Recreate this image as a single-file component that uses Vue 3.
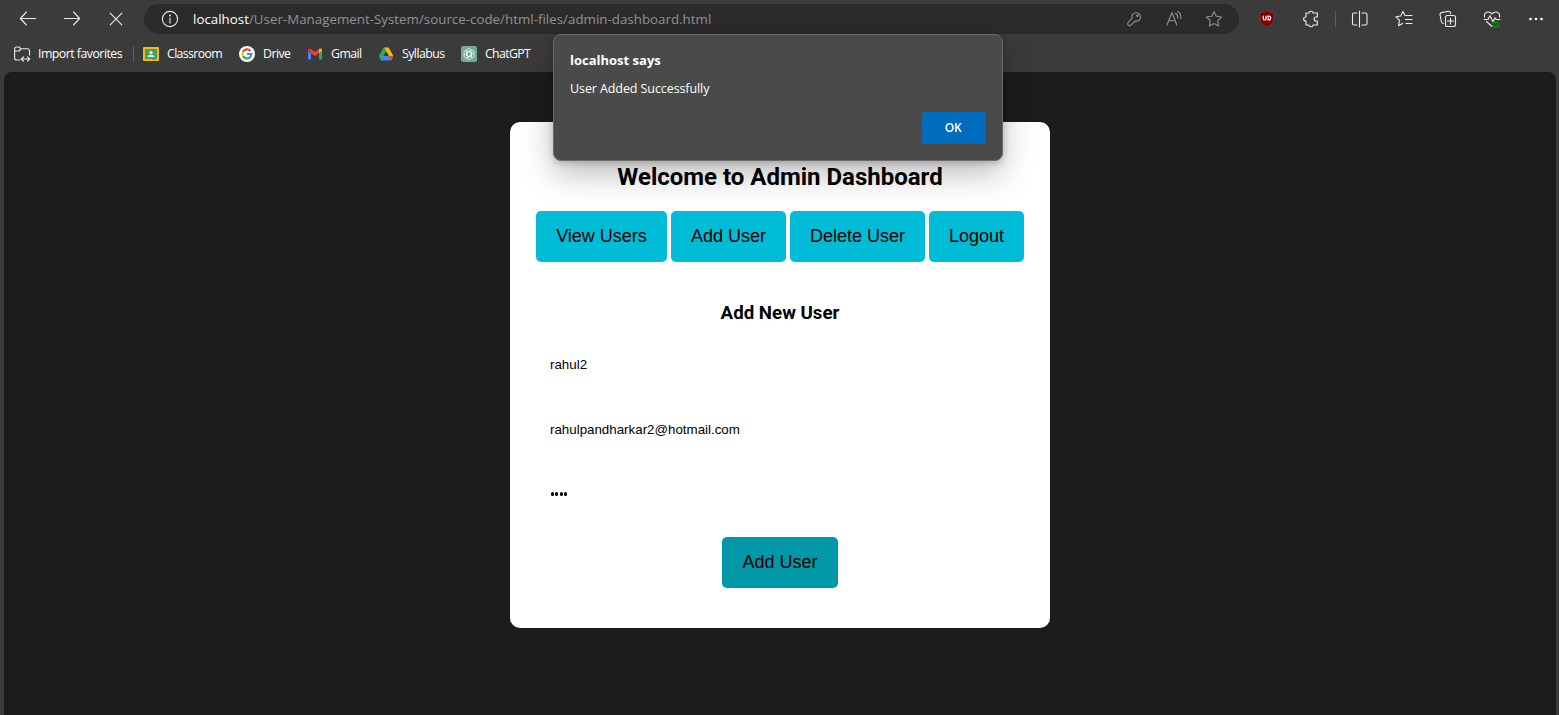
<script setup>
const favorites = [
  { id: 'classroom', label: 'Classroom', width: 56, tracking: -0.62 },
  { id: 'google', label: 'Drive', width: 28, tracking: -0.52 },
  { id: 'gmail', label: 'Gmail', width: 31, tracking: -0.55 },
  { id: 'drive', label: 'Syllabus', width: 43, tracking: -0.52 },
  { id: 'chatgpt', label: 'ChatGPT', width: 47, tracking: -0.65 },
]
const actions = [
  { label: 'View Users', width: 131 },
  { label: 'Add User', width: 115 },
  { label: 'Delete User', width: 135 },
  { label: 'Logout', width: 95 },
]
const petals = [0, 60, 120, 180, 240, 300]
</script>

<template>
  <div class="browser">
    <header class="toolbar">
      <div class="slot"><svg class="ic" viewBox="0 0 20 20"><path d="M17.5 9.5H2.500M8.500 3L2.400 9.500L8.500 16" /></svg></div>
      <div class="slot"><svg class="ic" viewBox="0 0 20 20"><path d="M2.500 9.500H17.500M11.500 3l6.100 6.500L11.500 16" /></svg></div>
      <div class="slot"><svg class="ic" viewBox="0 0 20 20"><path d="M4.200 4.200L15.800 15.800M15.800 4.200L4.200 15.800" /></svg></div>
      <div class="omnibox">
        <svg class="ic info" viewBox="0 0 20 20"><circle cx="10" cy="10" r="7.6" /><path d="M10 9v5" /><circle class="fill" cx="10" cy="6.5" r=".9" /></svg>
        <span class="url"><b>localhost</b>/User-Management-System/source-code/html-files/admin-dashboard.html</span>
        <div class="tools">
          <svg class="ic dim" viewBox="0 0 20 20"><path d="M8.2 8.9C7.3 5.8 9.6 3.7 12 3.7c2.6 0 4.4 2 4.4 4.2 0 2.7-2.3 4.800-5.100 4.100L6.800 16.200Q5.400 17.400 4.200 16.200Q3 15 4.200 13.500Z" /><circle cx="13.400" cy="6.700" r=".7" /></svg>
          <svg class="ic dim" viewBox="0 0 20 20"><path d="M3 16L7.700 4h.5L12.800 16M4.700 11.800h6.500M11.500 4.300c1.800 1 2.400 2.400 2.300 4.700M13.500 2.500c2.600 1.300 3.700 3.700 3.300 7" /></svg>
          <svg class="ic dim" viewBox="0 0 20 20"><path d="M10 2.500l2.300 4.800 5.200.7-3.800 3.700.9 5.300L10 14.600 5.400 17l.9-5.300L2.500 8l5.200-.7Z" /></svg>
        </div>
      </div>
      <div class="slot first">
        <svg class="ic" viewBox="0 0 20 20"><path class="shield" d="M10 1.800C12 3.200 14.300 3.700 16.700 3.900V10c0 3.800-3.100 6-6.700 7.800C6.400 16 3.300 13.800 3.300 10V3.900C5.700 3.700 8 3.200 10 1.800Z" /><path class="mark" d="M6.300 7v2.700c0 1.700 2.700 1.700 2.700 0V7M11 7v3.900h.8c2.500 0 2.500-3.900 0-3.900Z" /></svg>
      </div>
      <div class="slot"><svg class="ic" viewBox="0 0 20 20"><path d="M5 4h3c0-2.300 4-2.300 4 0h4.300v4h-1.200c-2.600 0-2.600 4 0 4h1.200v4H12c0 2.300-4 2.300-4 0H5v-4c-3.200 0-3.200-4 0-4Z" /></svg></div>
      <i class="bar"></i>
      <div class="slot"><svg class="ic crisp" viewBox="0 0 20 20"><path d="M7 4H4Q2.500 4 2.500 5.500v9Q2.500 16 4 16H7M12 4h3.500Q17 4 17 5.500v9q0 1.500-1.500 1.500H12M9.500 2v16" /></svg></div>
      <div class="slot"><svg class="ic" viewBox="0 0 20 20"><path d="M11.500 6.500H11L9 2.500 6.700 7 2 7.800l3.500 3.500-.9 5.400 4-2.100M11.500 6.500H18M11.500 10.500H18M12 14.500h6" /></svg></div>
      <div class="slot"><svg class="ic" viewBox="0 0 20 20"><rect x="7.500" y="6.500" width="10" height="11" rx="2" /><path d="M12.500 9v6M9.500 12h6M5.300 14.500L4.300 14Q3.500 13.500 3.300 12.500L2 5.500Q1.800 4 3.300 3.600L10.500 2.300Q12 2.100 12.400 3.500L12.700 4.600" /></svg></div>
      <div class="slot"><svg class="ic" viewBox="0 0 20 20"><path d="M2.500 8C1.500 3 7.300 1.500 10 5c2.700-3.500 8.500-2 7.500 3M2.200 10.500H6L8 6.800l3 6 2-4 1 1.700h4M4.500 12.500L10 17.500" /><circle class="green" cx="14" cy="15.300" r="3.600" /><path class="tick" d="M12.500 15.500l1 .8 2-2" /></svg></div>
      <div class="slot"><svg class="ic" viewBox="0 0 20 20"><circle class="fill" cx="4.500" cy="10" r="1.300" /><circle class="fill" cx="10" cy="10" r="1.300" /><circle class="fill" cx="15.500" cy="10" r="1.300" /></svg></div>
    </header>

    <nav class="favorites">
      <div class="fav">
        <svg class="ic folder" viewBox="0 0 16 16"><path d="M6 14H2.500Q.6 14 .6 12V3Q.6 1 2.500 1H5l2 1.800h6.500q2 0 2 2V9M.8 5H5l2-2M7.500 13h8M9.500 10.800L7.300 13l2.200 2.200M13.500 10.800L15.700 13l-2.200 2.200" /></svg>
        <span class="lead">Import favorites</span>
      </div>
      <i class="bar"></i>
      <div v-for="f in favorites" :key="f.id" class="fav item">
        <svg v-if="f.id === 'classroom'" viewBox="0 0 16 16"><rect y="1" width="16" height="14" rx="1" fill="#f6b913" /><rect x="2" y="3" width="12" height="10" fill="#44a05b" /><circle cx="8" cy="6.500" r="1.600" fill="#fff" /><path d="M4.500 11c.2-3 6.800-3 7 0Z" fill="#e5f4e8" /><path d="M9 13h4v1H9Z" fill="#c98f00" /></svg>
        <svg v-else-if="f.id === 'google'" viewBox="0 0 16 16"><circle cx="8" cy="8" r="8" fill="#fff" /><g fill="none" stroke-width="2.100"><path d="M11.500 5A4.500 4.500 0 0 0 4 5.900" stroke="#ea4335" /><path d="M4 5.900A4.600 4.600 0 0 0 4 10.100" stroke="#fbbc05" /><path d="M4 10.100A4.500 4.500 0 0 0 10.900 11.400" stroke="#34a853" /><path d="M8 8h4.500A4.500 4.500 0 0 1 10.900 11.400" stroke="#4285f4" /></g></svg>
        <svg v-else-if="f.id === 'gmail'" viewBox="0 0 16 16"><path d="M1 4v9.500h3V6.500Z" fill="#4285f4" /><path d="M15 4v9.500h-3V6.500Z" fill="#34a853" /><path d="M1 4C1 2.200 3 2 4.200 3L8 6v4L1 5Z" fill="#d93025" /><path d="M4 3v4l4 3 4-3V3L8 6Z" fill="#ea4335" /><path d="M12 3c1.200-1 3-.8 3 1v1l-3 2Z" fill="#fbbc05" /></svg>
        <svg v-else-if="f.id === 'drive'" viewBox="0 0 16 16"><path d="M5.500 1.500H8L9.800 4.800 4 14.500H3L.8 10Z" fill="#34a853" /><path d="M6.500 1.500h4L15.400 10h-4.600Z" fill="#fbbc05" /><path d="M4.700 10h10.700L13 14.500H3Z" fill="#4285f4" /><path d="M10.700 10h4.700L13.200 14.300Z" fill="#ea4335" /><path d="M8 5.500L10.600 10H5.400Z" fill="#3b3b3b" /></svg>
        <svg v-else viewBox="0 0 16 16"><rect width="16" height="16" rx="2.200" fill="#74aa9c" /><g fill="none" stroke="#fff" stroke-width=".75"><path v-for="a in petals" :key="a" d="M5.600 9.300V5.200C5.600 2.300 9 1.800 10.200 3.800M5.600 6.700L8.100 5.300L10.300 6.600" :transform="`rotate(${a} 8 8)`" /></g></svg>
        <span :style="{ width: f.width + 'px', letterSpacing: f.tracking + 'px' }">{{ f.label }}</span>
      </div>
    </nav>

    <main class="viewport">
      <section class="card">
        <h2>Welcome to Admin Dashboard</h2>
        <div class="actions">
          <button v-for="a in actions" :key="a.label" :style="{ width: a.width + 'px' }">{{ a.label }}</button>
        </div>
        <h3>Add New User</h3>
        <div class="field">rahul2</div>
        <div class="field">rahulpandharkar2@hotmail.com</div>
        <div class="field password"><i v-for="n in 4" :key="n"></i></div>
        <button class="submit">Add User</button>
      </section>
    </main>

    <div class="dialog">
      <strong>localhost says</strong>
      <p>User Added Successfully</p>
      <button>OK</button>
    </div>
  </div>
</template>

<style>
body { margin: 0; background: #3b3b3b; overflow: hidden; }
</style>

<style scoped>
* { box-sizing: border-box; }
.browser { position: relative; height: 715px; display: flex; flex-direction: column; background: #3b3b3b; color: #fff; font-family: "Open Sans", "Noto Sans", sans-serif; }
.toolbar { height: 38px; display: flex; align-items: center; padding-left: 6px; flex: none; }
.slot { width: 44px; flex: none; display: flex; justify-content: center; }
.slot.first { margin-left: 6px; }
.ic { width: 20px; height: 20px; flex: none; fill: none; stroke: #ececec; stroke-width: 1.1; stroke-linejoin: round; stroke-linecap: round; overflow: visible; }
.fill { fill: #fff; stroke: none; }
.dim { stroke: #919191; }
.shield { fill: #800000; stroke: #a33; stroke-width: .5; }
.mark { stroke: #fff; stroke-width: 1.2; }
.green { fill: #107c10; stroke: none; }
.tick { stroke: #064a06; stroke-width: 1; }
.omnibox { width: 1095px; height: 30px; margin-left: 6px; border-radius: 15px; background: #2b2b2b; display: flex; align-items: center; padding: 0 15px 0 16px; flex: none; }
.url { margin-left: 13px; font-size: 13.3px; letter-spacing: .025px; line-height: 20px; color: #929292; white-space: nowrap; }
.url b { color: #fff; font-weight: 400; }
.tools { margin-left: auto; display: flex; gap: 20px; }
.bar { width: 1px; height: 16px; background: #5d5d5d; flex: none; }
.toolbar .bar { margin: 0 2px; }
.favorites { height: 34px; display: flex; align-items: center; padding: 0 0 2px 14px; flex: none; font-size: 12.3px; }
.fav { display: flex; align-items: center; gap: 8px; white-space: nowrap; }
.fav svg { width: 16px; height: 16px; flex: none; }
.fav span { line-height: 16px; padding-bottom: 1px; }
.fav.item { margin-right: 16px; }
.favorites .bar { margin: 0 9px 0 10px; }
.lead { width: 85px; letter-spacing: -.5px; }
.viewport { flex: 1; margin: 0 3px 0 4px; border-radius: 8px 8px 0 0; background: #1c1c1c; padding: 50px 0 0 506px; }
.card { width: 540px; height: 506px; background: #fff; border-radius: 10px; color: #000; padding: 41px 26px 40px; text-align: center; }
h2 { margin: 0; font: 700 24px/29px Roboto, sans-serif; }
h3 { margin: 40px 0 15px; font: 700 18.72px/22px Roboto, sans-serif; }
.actions { display: flex; gap: 4px; margin-top: 19px; }
.card button { height: 51px; padding: 0; border: 0; border-radius: 5px; background: #00bcd6; color: #000; font: 18px "Liberation Sans", Arial, sans-serif; white-space: nowrap; }
.card .submit { width: 116px; background: #0097a7; margin-top: 18px; }
.field { height: 50px; margin: 0 14px 15px; display: flex; align-items: center; font: 13.333px "Liberation Sans", Arial, sans-serif; }
.password { gap: 1.4px; padding-left: .5px; margin-bottom: 0; }
.password i { width: 3.2px; height: 3.2px; border-radius: 50%; background: #000; }
.dialog { position: absolute; left: 553px; top: 34px; width: 450px; height: 127px; border: 1px solid #6b6b6b; border-radius: 8px; background: #4a4a4a; padding: 15px 16px 16px; box-shadow: 0 13px 32px rgba(0, 0, 0, .26), 0 2px 7px rgba(0, 0, 0, .2); display: flex; flex-direction: column; }
.dialog strong { font-size: 13px; line-height: 20px; }
.dialog p { margin: 9px 0 13px; font-size: 12.5px; letter-spacing: -.09px; line-height: 20px; }
.dialog button { align-self: flex-end; width: 64px; height: 32px; padding: 0 2px 1px 0; border: 0; border-radius: 3px; background: #006cbe; color: #fff; font: 600 12px "Open Sans", sans-serif; letter-spacing: -.3px; }
</style>
